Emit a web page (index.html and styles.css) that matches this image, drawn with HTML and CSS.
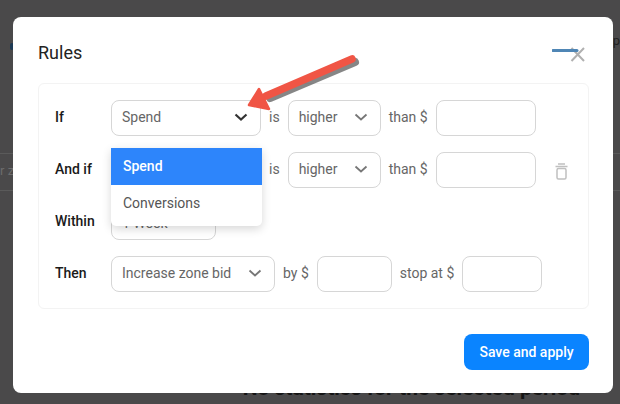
FILE: index.html
```html
<!DOCTYPE html>
<html lang="en">
  <head>
    <meta charset="UTF-8" />
    <title>Rules</title>
    <link rel="stylesheet" href="styles.css">
  </head>
  <body>
    <div class="page">
      <div class="page-top">
        <span class="back-mark"></span>
        <span class="page-top-text">Top</span>
      </div>
      <div class="page-table">
        <span class="page-cell">r zones</span>
      </div>
      <div class="page-empty">No statistics for the selected period</div>
    </div>

    <div class="modal">
      <header class="modal-head">
        <h2>Rules</h2>
        <svg class="close-icon" width="33" height="16" viewBox="0 0 33 16">
          <path d="M19.5 1 L32 14 M32 1 L19.5 14" stroke="#b0b0b0" stroke-width="2" fill="none" />
          <path d="M1 3.5 H25" stroke="#4f86b5" stroke-width="3" stroke-linecap="round" />
        </svg>
      </header>

      <div class="rules-panel">
        <div class="rule-row">
          <span class="rule-label">If</span>
          <div class="select-wrap">
            <div class="select select-metric select-open">
              <span>Spend</span>
              <svg class="chevron" width="14" height="8" viewBox="0 0 14 8">
                <path d="M1.5 1.5 L7 6.5 L12.5 1.5" fill="none" stroke="#333" stroke-width="2.2" />
              </svg>
            </div>
            <div class="dropdown">
              <div class="dropdown-item dropdown-active">Spend</div>
              <div class="dropdown-item">Conversions</div>
            </div>
          </div>
          <span class="rule-text">is</span>
          <div class="select select-compare">
            <span>higher</span>
            <svg class="chevron" width="14" height="8" viewBox="0 0 14 8">
              <path d="M1.5 1.5 L7 6.5 L12.5 1.5" fill="none" stroke="#777" stroke-width="1.8" />
            </svg>
          </div>
          <span class="rule-text">than $</span>
          <div class="field field-wide"></div>
        </div>

        <div class="rule-row">
          <span class="rule-label">And if</span>
          <div class="select select-metric"></div>
          <span class="rule-text">is</span>
          <div class="select select-compare">
            <span>higher</span>
            <svg class="chevron" width="14" height="8" viewBox="0 0 14 8">
              <path d="M1.5 1.5 L7 6.5 L12.5 1.5" fill="none" stroke="#777" stroke-width="1.8" />
            </svg>
          </div>
          <span class="rule-text">than $</span>
          <div class="field field-wide"></div>
          <svg class="trash-icon" width="13" height="17" viewBox="0 0 13 17">
            <path d="M3 1 H10 M0.5 3.5 H12.5" stroke="#c0c0c0" stroke-width="1.4" fill="none" />
            <rect x="2" y="5.5" width="9" height="10.5" rx="1.5" stroke="#c0c0c0" stroke-width="1.5" fill="none" />
          </svg>
        </div>

        <div class="rule-row">
          <span class="rule-label">Within</span>
          <div class="select select-period">
            <span>1 Week</span>
          </div>
        </div>

        <div class="rule-row">
          <span class="rule-label">Then</span>
          <div class="select select-action">
            <span>Increase zone bid</span>
            <svg class="chevron" width="14" height="8" viewBox="0 0 14 8">
              <path d="M1.5 1.5 L7 6.5 L12.5 1.5" fill="none" stroke="#777" stroke-width="1.8" />
            </svg>
          </div>
          <span class="rule-text">by $</span>
          <div class="field field-bid"></div>
          <span class="rule-text">stop at $</span>
          <div class="field field-stop"></div>
        </div>
      </div>

      <footer class="modal-foot">
        <button class="save-btn">Save and apply</button>
      </footer>
    </div>

    <!-- annotation arrow pasted over the screenshot -->
    <svg class="arrow" width="120" height="60" viewBox="0 0 120 60">
      <path d="M109 5 L24 41" transform="translate(2 2)" fill="none" stroke="#222" stroke-width="8" stroke-linecap="round" opacity="0.55" />
      <path d="M108 4 L22 41" fill="none" stroke="#f05545" stroke-width="7.5" stroke-linecap="round" />
      <path d="M5 50 L15 34 L25 54 Z" fill="#f05545" stroke="#f05545" stroke-width="2.5" stroke-linejoin="round" />
    </svg>
  </body>
</html>
```

FILE: styles.css
```css
* {
  margin: 0;
  padding: 0;
  box-sizing: border-box;
}

body {
  width: 620px;
  height: 404px;
  overflow: hidden;
  position: relative;
  font-family: Roboto, "Liberation Sans", sans-serif;
  background: #4a494a;
}

/* Dimmed page behind the modal */
.page {
  height: 404px;
  display: flex;
  flex-direction: column;
}

.page-top {
  height: 153px;
  padding: 33px 0 0 10px;
  display: flex;
  justify-content: space-between;
  font-size: 13px;
  color: #222;
}

.back-mark {
  width: 4px;
  height: 7px;
  margin-top: 10px;
  background: #1d3a55;
  border-radius: 2px;
}

.page-table {
  height: 38px;
  border-top: 1px solid #5a5a5a;
  border-bottom: 1px solid #5a5a5a;
  padding-top: 9px;
  font-size: 13px;
  color: #6d6d6d;
}

.page-cell {
  white-space: nowrap;
}

.page-empty {
  margin-top: auto;
  padding: 0 40px 4px 0;
  text-align: right;
  font-size: 21px;
  font-weight: 700;
  color: #151515;
}

/* Modal */
.modal {
  position: absolute;
  left: 13px;
  top: 17px;
  width: 600px;
  height: 376px;
  background: #fff;
  border-radius: 8px;
  padding: 25px 24px 0 25px;
}

.modal-head {
  height: 41px;
  display: flex;
  justify-content: space-between;
  align-items: flex-start;
}

.modal-head h2 {
  font-size: 18px;
  line-height: 21px;
  font-weight: 400;
  color: #222;
}

.close-icon {
  margin: 5px 4px 0 0;
}

.rules-panel {
  width: 551px;
  height: 226px;
  border: 1px solid #f3f3f3;
  border-radius: 6px;
  padding: 16px;
  display: flex;
  flex-direction: column;
  gap: 16px;
}

.rule-row {
  height: 36px;
  display: flex;
  align-items: center;
  gap: 8px;
  font-size: 14px;
  color: #666;
}

.rule-label {
  width: 48px;
  margin-bottom: 2px;
  font-weight: 500;
  color: #1a1a1a;
}

.rule-text {
  margin-bottom: 2px;
  white-space: nowrap;
}

.select-wrap {
  position: relative;
}

.select {
  height: 36px;
  padding: 0 12px 2px 10px;
  display: flex;
  align-items: center;
  justify-content: space-between;
  border: 1px solid #d6d6d6;
  border-radius: 8px;
  background: #fff;
  white-space: nowrap;
}

.select-metric {
  width: 150px;
}

.select-compare {
  width: 93px;
}

.select-period {
  width: 105px;
  padding-top: 2px;
  padding-bottom: 0;
}

.select-action {
  width: 164px;
}

.dropdown {
  position: absolute;
  left: 0;
  top: 48px;
  width: 151px;
  height: 78px;
  background: #fff;
  border-radius: 0 0 5px 5px;
  box-shadow: 0 3px 10px rgba(0, 0, 0, 0.16);
  z-index: 2;
}

.dropdown-item {
  height: 37px;
  padding-left: 12px;
  line-height: 36px;
  color: #555;
}

.dropdown-active {
  background: #2d85fb;
  color: #fff;
  font-weight: 500;
}

.field {
  height: 36px;
  border: 1px solid #d6d6d6;
  border-radius: 8px;
}

.field-wide {
  width: 100px;
}

.field-bid {
  width: 75px;
}

.field-stop {
  width: 80px;
}

.trash-icon {
  margin-left: 11px;
  margin-top: 2px;
}

.modal-foot {
  margin-top: 25px;
  display: flex;
  justify-content: flex-end;
}

.save-btn {
  width: 125px;
  height: 36px;
  border: none;
  border-radius: 8px;
  background: #0a84ff;
  color: #fff;
  font-family: inherit;
  font-size: 14px;
  font-weight: 500;
}

.arrow {
  position: absolute;
  left: 244px;
  top: 55px;
}
```
